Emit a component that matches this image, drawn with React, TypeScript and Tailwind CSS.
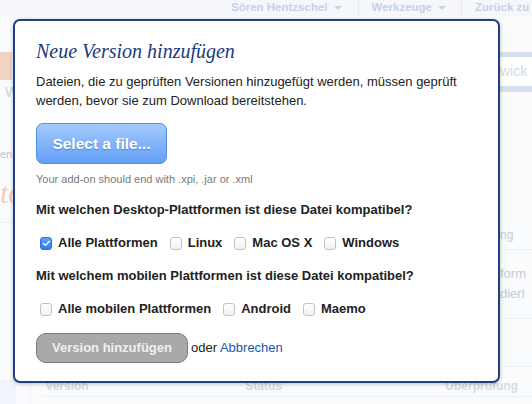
import { Check } from 'lucide-react'

const desktop = [
  { label: 'Alle Plattformen', checked: true },
  { label: 'Linux', checked: false },
  { label: 'Mac OS X', checked: false },
  { label: 'Windows', checked: false },
]

const mobile = [
  { label: 'Alle mobilen Plattformen', checked: false },
  { label: 'Android', checked: false },
  { label: 'Maemo', checked: false },
]

function Box({ checked }: { checked: boolean }) {
  return checked ? (
    <span className="flex h-[13px] w-[12px] items-center justify-center rounded-[3px] border border-[#2f6fd8] bg-gradient-to-b from-[#5ea2fb] to-[#2f7cf0]">
      <Check className="h-[9px] w-[9px] text-white" strokeWidth={3.5} />
    </span>
  ) : (
    <span className="h-[13px] w-[12px] rounded-[3px] border border-[#c2c2c2] bg-gradient-to-b from-white to-[#f1f1f1]" />
  )
}

function Options({ items }: { items: { label: string; checked: boolean }[] }) {
  return (
    <div className="ml-[4px] flex items-center gap-[12px]">
      {items.map((item) => (
        <label key={item.label} className="flex items-center gap-[6px] text-[13px] font-bold leading-[16px] text-[#222]">
          <Box checked={item.checked} />
          {item.label}
        </label>
      ))}
    </div>
  )
}

function Caret() {
  return <span className="h-0 w-0 border-x-[4px] border-t-[4px] border-x-transparent border-t-[#cdd4e2]" />
}

export default function App() {
  return (
    <div className="relative h-[404px] w-[532px] overflow-hidden bg-[#fafbfd] font-['Liberation_Sans',Arial,sans-serif]">
      {/* faded page behind the dialog */}
      <div className="flex h-full flex-col">
        <nav className="flex h-[16px] items-center bg-[#f5f7fb] pl-[231px] text-[11.5px] font-bold text-[#c6d1e8]">
          <span className="flex items-center gap-[6px] pr-[16px]">
            Sören Hentzschel <Caret />
          </span>
          <span className="h-[16px] w-px bg-[#e6eaf2]" />
          <span className="flex items-center gap-[6px] pl-[13px] pr-[15px]">
            Werkzeuge <Caret />
          </span>
          <span className="h-[16px] w-px bg-[#e6eaf2]" />
          <span className="whitespace-nowrap pl-[13px]">Zurück zu</span>
        </nav>
        <div className="flex flex-1">
          <div className="flex w-[36px] flex-col">
            <div className="mt-[36px] h-[28px] w-[12px] bg-[#f3d3c2]" />
            <span className="mt-[5px] pl-[5px] text-[14px] leading-none text-[#c8d2e6]">W</span>
            <span className="mt-[50px] text-[11px] leading-none text-[#b9c3d6]">en</span>
            <span className="mt-[18px] font-['Liberation_Serif',serif] text-[30px] italic leading-none text-[#f2cbbd]">to</span>
            <div className="mt-[14px] h-px w-full bg-[#eef1f6]" />
            <div className="mt-auto h-[24px] w-[16px] bg-[#f1f5fb]" />
          </div>
          <div className="flex flex-1 flex-col justify-end border-l border-[#f0f2f6]">
            <div className="flex h-[22px] items-start px-[14px] pt-[3px] text-[12px] font-bold text-[#d5dbe5]">
              <span className="w-[200px]">Version</span>
              <span className="w-[200px]">Status</span>
              <span>Überprüfung</span>
            </div>
            <div className="ml-[12px] h-[8px] border-t border-[#eef1f6]" />
          </div>
        </div>
      </div>
      <div className="absolute right-0 top-[52px] flex w-[32px] flex-col">
        <div className="h-[5px] bg-[#d3e0f0]" />
        <div className="flex h-[29px] items-center bg-white text-[14px] text-[#d6dae1]">wick</div>
        <div className="h-[6px] bg-[#d3e0f0]" />
        <div className="mt-[137px] text-[12px] leading-none text-[#c5cbd5]">ng</div>
        <div className="mt-[8px] h-px bg-[#eef1f6]" />
        <div className="mt-[14px] text-[13px] leading-[20px] text-[#c5cbd5]">
          form<br />dierl
        </div>
        <div className="mt-[14px] h-px bg-[#eef1f6]" />
        <div className="mt-[47px] h-px bg-[#eef1f6]" />
      </div>

      {/* dialog */}
      <div className="absolute left-[13px] top-[19px] h-[364px] w-[487px] rounded-[7px] border-[2px] border-[#1f3f82] bg-white px-[21px] pt-[18px] shadow-[0_1px_4px_rgba(0,0,0,0.25)]">
        <h2 className="font-['Liberation_Serif',Georgia,serif] text-[20px] italic leading-[24px] text-[#1b3b7d]">
          Neue Version hinzufügen
        </h2>
        <p className="mt-[9px] w-[430px] text-[13px] leading-[19px] text-[#222]">
          Dateien, die zu geprüften Versionen hinzugefügt werden, müssen geprüft werden, bevor sie zum Download
          bereitstehen.
        </p>
        <button className="mt-[13px] flex h-[41px] w-[131px] items-center justify-center rounded-[7px] border border-[#5390e4] bg-gradient-to-b from-[#a3cafb] to-[#649ff6] text-[15.5px] font-bold text-white [text-shadow:0_1px_1px_rgba(40,90,170,0.5)]">
          Select a file...
        </button>
        <p className="mt-[8px] text-[11px] leading-[14px] text-[#7a7a7a]">Your add-on should end with .xpi, .jar or .xml</p>
        <h3 className="mt-[16px] text-[13px] font-bold leading-[16px] text-[#222]">
          Mit welchen Desktop-Plattformen ist diese Datei kompatibel?
        </h3>
        <div className="mt-[17px]">
          <Options items={desktop} />
        </div>
        <h3 className="mt-[17px] text-[13px] font-bold leading-[16px] text-[#222]">
          Mit welchem mobilen Plattformen ist diese Datei kompatibel?
        </h3>
        <div className="mt-[17px]">
          <Options items={mobile} />
        </div>
        <div className="mt-[16px] flex items-center gap-[3px] text-[13px] text-[#222]">
          <button className="flex h-[30px] w-[152px] items-center justify-center rounded-[10px] border border-[#7a7a7a] bg-[#a9a9a9] font-bold text-[#f0f0f0]">
            Version hinzufügen
          </button>
          <span>
            oder <a className="text-[#1f55b0]">Abbrechen</a>
          </span>
        </div>
      </div>
    </div>
  )
}
